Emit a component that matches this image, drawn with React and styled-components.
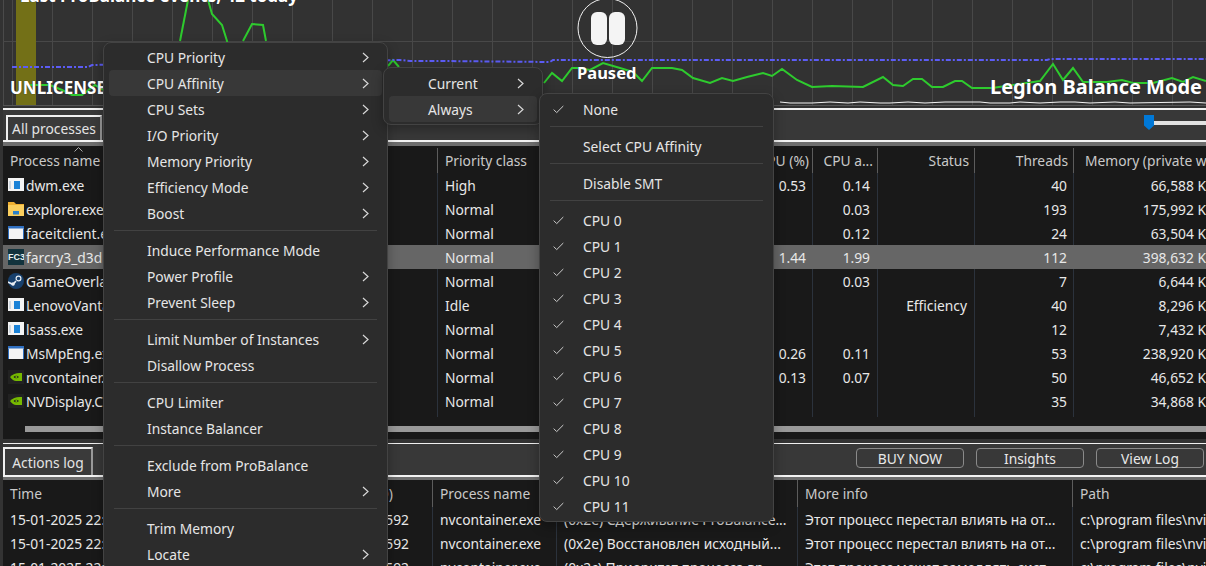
import { createGlobalStyle, styled } from 'styled-components'

const GlobalStyle = createGlobalStyle`
  html, body {
    margin: 0;
    padding: 0;
    overflow: hidden;
    background: #333;
  }
  * {
    box-sizing: border-box;
  }
`

const font = `"Noto Sans", "Open Sans", "Liberation Sans", sans-serif`

const Page = styled.div`
  position: relative;
  width: 1206px;
  height: 566px;
  overflow: hidden;
  background: #333;
  color: #e8e8e8;
  font-family: ${font};
  font-size: 13.8px;
  display: flex;
  flex-direction: column;
  padding-left: 3px;
`

const Graph = styled.div`
  position: relative;
  flex: none;
  height: 108px;
  margin-left: -3px;
`

const GraphSvg = styled.svg`
  display: block;
`

const GraphLabel = styled.div`
  position: absolute;
  left: ${props => props.$left}px;
  top: ${props => props.$top}px;
  color: #fff;
  font-weight: 700;
  font-size: ${props => props.$size}px;
  line-height: 24px;
  white-space: nowrap;
  text-shadow: 0 0 1px #222;
`

const PauseButton = styled.div`
  position: absolute;
  left: 577px;
  top: -2px;
`

const Toolbar = styled.div`
  flex: none;
  height: 38px;
  display: flex;
  align-items: flex-end;
  justify-content: space-between;
  background: linear-gradient(to top, #6e6e6e 0 4px, #f4f4f4 4px 6px, #383838 6px);
  border-top: 2px solid #f0f0f0;
  padding: 0 0 6px 3px;
`

const TabBox = styled.div`
  flex: none;
  width: ${props => props.$width}px;
  height: ${props => props.$height}px;
  display: flex;
  align-items: center;
  justify-content: center;
  background: #3a3a3a;
  color: #e4e4e4;
  border: 2px solid #f0f0f0;
  border-right-color: #9a9a9a;
  border-bottom: none;
`

const Slider = styled.div`
  flex: none;
  align-self: flex-start;
  display: flex;
  align-items: center;
  width: 62px;
  margin-top: 5px;
`

const SliderThumb = styled.div`
  flex: none;
  width: 10px;
  height: 15px;
  background: #0078d7;
  clip-path: polygon(0 0, 100% 0, 100% 70%, 50% 100%, 0 70%);
`

const SliderTrack = styled.div`
  flex: 1;
  height: 4px;
  background: #e2e2e2;
`

const TableWrap = styled.div`
  flex: none;
  height: ${props => props.$height}px;
  background: #191919;
  overflow: hidden;
`

const Row = styled.div`
  display: grid;
  grid-template-columns: ${props => props.$columns};
  height: ${props => props.$height}px;
  background: ${props => (props.$selected ? '#666' : 'transparent')};
  width: max-content;
`

const Cell = styled.div`
  display: flex;
  align-items: center;
  gap: 2px;
  min-width: 0;
  height: 100%;
  overflow: hidden;
  white-space: nowrap;
  padding-left: ${props => props.$padLeft ?? 7}px;
  padding-right: ${props => props.$padRight ?? 7}px;
  justify-content: ${props => (props.$right ? 'flex-end' : 'flex-start')};
  color: ${props => (props.$head ? '#c9c9c9' : '#e8e8e8')};
  border-right: 1px solid ${props => (props.$head ? '#5c5c5c' : props.$selected ? '#666' : '#2b323c')};
`

const SortArrow = styled.svg`
  position: absolute;
  left: 71px;
  top: 1px;
`

const HeadRow = styled(Row)`
  position: relative;
  padding-top: 2px;
`

const RowFill = styled.div`
  height: 4px;
  display: grid;
  width: max-content;
  grid-template-columns: ${props => props.$columns};
`

const FillCell = styled.div`
  border-right: 1px solid #2b323c;
`

const Scrollbar = styled.div`
  height: 6px;
  margin: 9px 0 0 22px;
  background: #999;
`

const LogBar = styled.div`
  flex: none;
  height: 37px;
  margin-top: 4px;
  display: flex;
  align-items: flex-start;
  justify-content: space-between;
  background: linear-gradient(to top, #6e6e6e 0 3px, #f4f4f4 3px 5px, #383838 5px);
  border-top: 1px solid #f0f0f0;
  padding-bottom: 5px;
`

const LogTab = styled(TabBox)`
  margin-top: 3px;
`

const ButtonRow = styled.div`
  display: flex;
  gap: 12px;
  margin: 4px 2px 0 0;
`

const BarButton = styled.div`
  width: 108px;
  height: 20px;
  display: flex;
  align-items: center;
  justify-content: center;
  border: 1px solid #8a8a8a;
  border-radius: 4px;
  color: #e8e8e8;
`

const Menu = styled.div`
  position: absolute;
  left: ${props => props.$left}px;
  top: ${props => props.$top}px;
  width: ${props => props.$width}px;
  padding: ${props => props.$padTop}px 5px 2px;
  background: #2c2c2c;
  border: 1px solid #434343;
  border-radius: 8px;
  box-shadow: 0 4px 12px rgba(0, 0, 0, 0.3);
`

const MenuItem = styled.div`
  position: relative;
  height: 26px;
  display: flex;
  align-items: center;
  justify-content: space-between;
  padding-left: ${props => props.$indent}px;
  padding-right: 13px;
  border-radius: 4px;
  background: ${props => (props.$active ? '#383838' : 'transparent')};
  color: #e6e6e6;
  white-space: nowrap;
`

const MenuCheck = styled.svg`
  position: absolute;
  left: 8px;
  top: 9px;
`

const MenuRule = styled.div`
  height: 1px;
  margin: 4px 5px 6px;
  background: #424242;
`

const Chevron = () => (
  <svg width="7" height="11" viewBox="0 0 7 11" fill="none">
    <path d="M1 1l5 4.5L1 10" stroke="#d8d8d8" strokeWidth="1.2" />
  </svg>
)

const Check = () => (
  <MenuCheck width="11" height="9" viewBox="0 0 11 9" fill="none">
    <path d="M.7 4.6l3 3L10.3 1" stroke="#cfcfcf" strokeWidth="1" />
  </MenuCheck>
)

const WindowIcon = ({ app }) => (
  <svg width="16" height="14" viewBox="0 0 16 14" style={{ flex: 'none' }}>
    <rect x="0" y="0" width="16" height="13" fill="#f4f4f4" />
    {app ? (
      <>
        <rect x="6" y="3" width="6" height="8" fill="#1b82d6" />
        <rect x="1" y="3" width="2" height="8" fill="#cfd8e0" />
      </>
    ) : (
      <>
        <rect x="0" y="0" width="16" height="2.5" fill="#2f6fc0" />
        <rect x="0" y="2.5" width="1" height="10.5" fill="#2f6fc0" />
        <rect x="15" y="2.5" width="1" height="10.5" fill="#2f6fc0" />
      </>
    )}
  </svg>
)

const FolderIcon = () => (
  <svg width="16" height="16" viewBox="0 0 16 16" style={{ flex: 'none' }}>
    <path d="M0 1h6l2 2h8v12H0z" fill="#f0b032" />
    <path d="M0 4h16v11H0z" fill="#fbcf5e" />
    <rect x="5" y="10" width="6" height="3.5" fill="#2a80c8" />
  </svg>
)

const FarCryIcon = () => (
  <svg width="16" height="16" viewBox="0 0 16 16" style={{ flex: 'none' }}>
    <rect width="16" height="16" fill="#12333d" />
    <text x="0" y="11" fontSize="9" fontWeight="700" fill="#e6f2f2" fontFamily="Liberation Sans Narrow, Liberation Sans">FC3</text>
  </svg>
)

const SteamIcon = () => (
  <svg width="16" height="16" viewBox="0 0 16 16" style={{ flex: 'none' }}>
    <circle cx="8" cy="8" r="8" fill="#17406d" />
    <circle cx="10.5" cy="5.5" r="2.4" fill="none" stroke="#e8eef4" strokeWidth="1.2" />
    <path d="M0 9l5 2.4 3-3.4" stroke="#e8eef4" strokeWidth="1.6" fill="none" />
    <circle cx="5" cy="11" r="1.8" fill="#e8eef4" />
  </svg>
)

const NvidiaIcon = () => (
  <svg width="16" height="14" viewBox="0 0 16 14" style={{ flex: 'none' }}>
    <rect width="16" height="14" fill="#222" />
    <path d="M2 7c3-3.500 7-4.500 12-4v8H8C6 11 4 9.500 2 7z" fill="#76b900" />
    <path d="M5.500 7C7 5.500 9 5.200 11 7 9 8.600 7 8.600 5.500 7z" fill="#222" />
    <circle cx="8.300" cy="7" r="1" fill="#76b900" />
  </svg>
)

const iconFor = {
  app: <WindowIcon app />,
  win: <WindowIcon />,
  folder: <FolderIcon />,
  fc3: <FarCryIcon />,
  steam: <SteamIcon />,
  nv: <NvidiaIcon />
}

const processColumns = '435px 202px 173px 65px 97px 99px 136px'
const logColumns = '297px 133px 124px 241px 275px 160px'

const processes = [
  ['app', 'dwm.exe', 'High', '0.53', '0.14', '', '40', '66,588 K'],
  ['folder', 'explorer.exe', 'Normal', '', '0.03', '', '193', '175,992 K'],
  ['win', 'faceitclient.exe', 'Normal', '', '0.12', '', '24', '63,504 K'],
  ['fc3', 'farcry3_d3d11.exe', 'Normal', '1.44', '1.99', '', '112', '398,632 K'],
  ['steam', 'GameOverlayUI.exe', 'Normal', '', '0.03', '', '7', '6,644 K'],
  ['app', 'LenovoVantageService.exe', 'Idle', '', '', 'Efficiency', '40', '8,296 K'],
  ['app', 'lsass.exe', 'Normal', '', '', '', '12', '7,432 K'],
  ['win', 'MsMpEng.exe', 'Normal', '0.26', '0.11', '', '53', '238,920 K'],
  ['nv', 'nvcontainer.exe', 'Normal', '0.13', '0.07', '', '50', '46,652 K'],
  ['nv', 'NVDisplay.Container.exe', 'Normal', '', '', '', '35', '34,868 K']
]

const logRows = [
  ['15-01-2025 22:30:41', '13592', 'nvcontainer.exe', '(0x2e) Сдерживание ProBalance...', 'Этот процесс перестал влиять на от...', 'c:\\program files\\nvidia corporation\\nvcontainer.exe'],
  ['15-01-2025 22:30:40', '13592', 'nvcontainer.exe', '(0x2e) Восстановлен исходный...', 'Этот процесс перестал влиять на от...', 'c:\\program files\\nvidia corporation\\nvcontainer.exe'],
  ['15-01-2025 22:30:36', '13592', 'nvcontainer.exe', '(0x2c) Приоритет процесса вр...', 'Этот процесс может замедлять сист...', 'c:\\program files\\nvidia corporation\\nvcontainer.exe']
]

const mainMenu = [
  ['CPU Priority', true], ['CPU Affinity', true, true], ['CPU Sets', true], ['I/O Priority', true],
  ['Memory Priority', true], ['Efficiency Mode', true], ['Boost', true], null,
  ['Induce Performance Mode'], ['Power Profile', true], ['Prevent Sleep', true], null,
  ['Limit Number of Instances', true], ['Disallow Process'], null,
  ['CPU Limiter'], ['Instance Balancer'], null,
  ['Exclude from ProBalance'], ['More', true], null,
  ['Trim Memory'], ['Locate', true]
]

const cpuItems = ['CPU 0', 'CPU 1', 'CPU 2', 'CPU 3', 'CPU 4', 'CPU 5', 'CPU 6', 'CPU 7', 'CPU 8', 'CPU 9', 'CPU 10', 'CPU 11']

// traced off the reference, broken where the menus cover the line anyway
const cpuLine = [
  '30,85 50,85 62,90 72,95 82,95 95,85 103,90',
  '180,41 188,0',
  '208,0 212,14 222,25 227,41 230,60',
  '243,41 252,24 263,25 266,41',
  '388,66 393,60 399,67',
  '544,83 552,73 562,81 572,68 578,68 590,70 603,63 620,68 633,72 642,81 652,68 672,68 682,70 693,78 710,83 722,78 733,81 747,77 763,73 772,76 782,69 797,80 812,87 832,86 863,87 883,77 893,85 903,86 913,79 922,79 932,87 943,87 955,81 962,81 972,88 992,88 1040,81 1053,64 1063,80 1073,68 1083,82 1107,82 1122,80 1133,83 1153,83 1172,78 1183,82 1193,77 1206,81'
]

const gridLines = Array.from({ length: 30 }, (_, i) => 12 + i * 40)

const threadLine = '780,102 790,103 812,103 830,102 848,103 860,102 880,103 890,103 908,102 925,103 945,102 980,102 990,103 1010,103 1020,102 1040,103 1060,102 1075,102 1090,103 1115,102 1130,103 1190,102 1206,103'

const GraphPanel = () => (
  <Graph>
    <GraphSvg width="1206" height="108">
      <rect width="1206" height="108" fill="#323232" />
      <rect x="3" width="1" height="105" fill="#4a4a4a" />
      {gridLines.map(x => <rect key={x} x={x} width="1" height="105" fill="#484848" />)}
      <rect x="3" y="41" width="1203" height="1" fill="#484848" />
      <rect x="3" y="105" width="1203" height="1" fill="#555" />
      <rect x="16" width="20" height="105" fill="#737017" />
      {cpuLine.map(points => <polyline key={points} points={points} fill="none" stroke="#2ecb2e" strokeWidth="2" />)}
      <polyline points="12,67 88,67 92,65 150,64 400,60 410,61 440,61 550,62 553,60 1047,60 1050,59 1206,59" fill="none" stroke="#5c5cf5" strokeWidth="2" strokeDasharray="5 2 2 2" />
      <polyline points={threadLine} fill="none" stroke="#f2f2f2" strokeWidth="1" />
    </GraphSvg>
    <GraphLabel $left={20} $top={-16} $size={17}>Last ProBalance events, 42 today</GraphLabel>
    <GraphLabel $left={10} $top={76} $size={17}>UNLICENSED</GraphLabel>
    <GraphLabel $left={577} $top={61} $size={16.5}>Paused</GraphLabel>
    <GraphLabel $left={990} $top={75} $size={20}>Legion Balance Mode</GraphLabel>
    <PauseButton>
      <svg width="61" height="61" viewBox="0 0 61 61">
        <circle cx="30.500" cy="30" r="29.500" fill="none" stroke="#f2f2f2" strokeWidth="1" />
        <rect x="14" y="14" width="16" height="33" rx="6" fill="#f4f4f4" />
        <rect x="32" y="14" width="16" height="33" rx="6" fill="#f4f4f4" />
      </svg>
    </PauseButton>
  </Graph>
)

const ProcessTable = () => (
  <TableWrap $height={293}>
    <HeadRow $columns={processColumns} $height={27}>
      <SortArrow width="9" height="5" viewBox="0 0 9 5" fill="none">
        <path d="M.5 4.500l4-4 4 4" stroke="#aaa" strokeWidth="1" />
      </SortArrow>
      <Cell $head>Process name</Cell>
      <Cell $head>Priority class</Cell>
      <Cell $head $right $padRight={3}>CPU (%)</Cell>
      <Cell $head $right $padRight={4}>CPU a...</Cell>
      <Cell $head $right $padRight={5}>Status</Cell>
      <Cell $head $right $padRight={5}>Threads</Cell>
      <Cell $head $padLeft={11} $padRight={0}>Memory (private working set)</Cell>
    </HeadRow>
    {processes.map(([icon, name, priority, cpu, avg, status, threads, memory]) => {
      const selected = name.startsWith('farcry')
      return (
        <Row key={name} $columns={processColumns} $height={24} $selected={selected}>
          <Cell $selected={selected} $padLeft={5}>{iconFor[icon]}{name}</Cell>
          <Cell $selected={selected}>{priority}</Cell>
          <Cell $selected={selected} $right $padRight={6}>{cpu}</Cell>
          <Cell $selected={selected} $right>{avg}</Cell>
          <Cell $selected={selected} $right>{status}</Cell>
          <Cell $selected={selected} $right $padRight={6}>{threads}</Cell>
          <Cell $selected={selected} $right $padRight={3}>{memory}</Cell>
        </Row>
      )
    })}
    <RowFill $columns={processColumns}>
      {processColumns.split(' ').map((width, i) => <FillCell key={i} />)}
    </RowFill>
    <Scrollbar />
  </TableWrap>
)

const LogTable = () => (
  <TableWrap $height={86}>
    <Row $columns={logColumns} $height={27}>
      <Cell $head>Time</Cell>
      <Cell $head $right $padRight={39}>(PID)</Cell>
      <Cell $head>Process name</Cell>
      <Cell $head>Action</Cell>
      <Cell $head>More info</Cell>
      <Cell $head>Path</Cell>
    </Row>
    {logRows.map(([time, pid, name, action, info, path], i) => (
      <Row key={i} $columns={logColumns} $height={24}>
        <Cell>{time}</Cell>
        <Cell $right $padRight={23}>{pid}</Cell>
        <Cell>{name}</Cell>
        <Cell $padRight={0}>{action}</Cell>
        <Cell $padRight={0}>{info}</Cell>
        <Cell $padRight={0}>{path}</Cell>
      </Row>
    ))}
  </TableWrap>
)

const ContextMenus = () => (
  <>
    <Menu $left={103} $top={42} $width={285} $padTop={1}>
      {mainMenu.map((item, i) => item ? (
        <MenuItem key={i} $indent={38} $active={item[2]}>
          {item[0]}
          {item[1] && <Chevron />}
        </MenuItem>
      ) : <MenuRule key={i} />)}
    </Menu>
    <Menu $left={383} $top={67} $width={160} $padTop={2}>
      <MenuItem $indent={39}>Current<Chevron /></MenuItem>
      <MenuItem $indent={39} $active>Always<Chevron /></MenuItem>
    </Menu>
    <Menu $left={539} $top={93} $width={235} $padTop={2}>
      <MenuItem $indent={38}><Check />None</MenuItem>
      <MenuRule />
      <MenuItem $indent={38}>Select CPU Affinity</MenuItem>
      <MenuRule />
      <MenuItem $indent={38}>Disable SMT</MenuItem>
      <MenuRule />
      {cpuItems.map(cpu => <MenuItem key={cpu} $indent={38}><Check />{cpu}</MenuItem>)}
    </Menu>
  </>
)

export default function App() {
  return (
    <>
      <GlobalStyle />
      <Page>
        <GraphPanel />
        <Toolbar>
          <TabBox $width={96} $height={25}>All processes</TabBox>
          <Slider>
            <SliderThumb />
            <SliderTrack />
          </Slider>
        </Toolbar>
        <ProcessTable />
        <LogBar>
          <LogTab $width={90} $height={28}>Actions log</LogTab>
          <ButtonRow>
            <BarButton>BUY NOW</BarButton>
            <BarButton>Insights</BarButton>
            <BarButton>View Log</BarButton>
          </ButtonRow>
        </LogBar>
        <LogTable />
        <ContextMenus />
      </Page>
    </>
  )
}
